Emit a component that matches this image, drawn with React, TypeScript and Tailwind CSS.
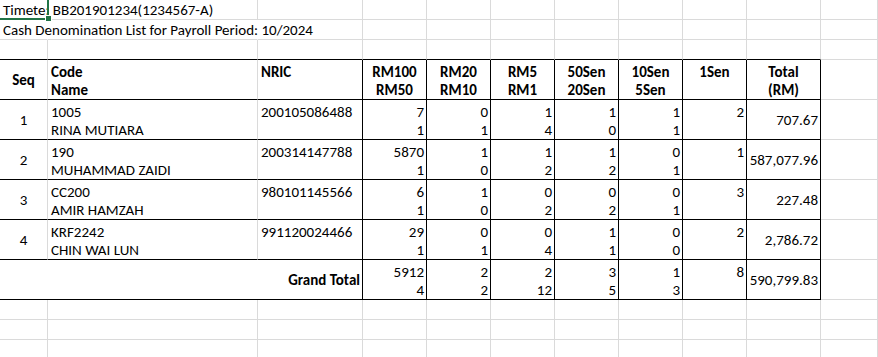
import React from "react";

type Border = "g" | "k" | "n";
const RB: Record<Border, string> = {
  g: "border-r border-r-[#dadada]",
  k: "border-r border-r-black",
  n: "border-r border-r-transparent",
};
const BB: Record<Border, string> = {
  g: "border-b border-b-[#dadada]",
  k: "border-b border-b-black",
  n: "border-b border-b-transparent",
};
const HA = {
  l: "items-start pl-[3px]",
  r: "items-end pr-[2px]",
  c: "items-center",
};
const VA = {
  b: "justify-end",
  c: "justify-center",
};

function Cell({
  r = "g",
  b = "g",
  h = "l",
  v = "b",
  bold = false,
  span3 = false,
  lines = [],
}: {
  r?: Border;
  b?: Border;
  h?: "l" | "r" | "c";
  v?: "b" | "c";
  bold?: boolean;
  span3?: boolean;
  lines?: string[];
}) {
  return (
    <div
      className={`flex flex-col min-w-0 whitespace-nowrap leading-[18px] ${RB[r]} ${BB[b]} ${HA[h]} ${VA[v]} ${
        bold ? "font-bold" : "font-normal"
      } ${span3 ? "col-span-3" : ""}`}
    >
      {lines.map((t, i) => (
        <div key={i}>{t === "" ? "\u00a0" : t}</div>
      ))}
    </div>
  );
}

type Row = {
  seq: string;
  code: string;
  name: string;
  nric: string;
  n: [string, string][];
  s1: string;
  total: string;
};

const rows: Row[] = [
  {
    seq: "1",
    code: "1005",
    name: "RINA MUTIARA",
    nric: "200105086488",
    n: [["7", "1"], ["0", "1"], ["1", "4"], ["1", "0"], ["1", "1"]],
    s1: "2",
    total: "707.67",
  },
  {
    seq: "2",
    code: "190",
    name: "MUHAMMAD ZAIDI",
    nric: "200314147788",
    n: [["5870", "1"], ["1", "0"], ["1", "2"], ["1", "2"], ["0", "1"]],
    s1: "1",
    total: "587,077.96",
  },
  {
    seq: "3",
    code: "CC200",
    name: "AMIR HAMZAH",
    nric: "980101145566",
    n: [["6", "1"], ["1", "0"], ["0", "2"], ["0", "2"], ["0", "1"]],
    s1: "3",
    total: "227.48",
  },
  {
    seq: "4",
    code: "KRF2242",
    name: "CHIN WAI LUN",
    nric: "991120024466",
    n: [["29", "1"], ["0", "1"], ["0", "4"], ["1", "1"], ["0", "0"]],
    s1: "2",
    total: "2,786.72",
  },
];

const grand: [string, string][] = [
  ["5912", "4"],
  ["2", "2"],
  ["2", "12"],
  ["3", "5"],
  ["1", "3"],
];

const headers: [string, string][] = [
  ["RM100", "RM50"],
  ["RM20", "RM10"],
  ["RM5", "RM1"],
  ["50Sen", "20Sen"],
  ["10Sen", "5Sen"],
];

function EmptyRow({ bottom = "g" as Border }) {
  return (
    <>
      {Array.from({ length: 11 }).map((_, i) => (
        <Cell key={i} b={i < 10 ? bottom : "g"} />
      ))}
    </>
  );
}

export default function App() {
  return (
    <div className="relative w-[878px] h-[357px] overflow-hidden bg-white text-black text-[15px] font-[family-name:Calibri,Carlito,Lato,sans-serif]">
      <div className="grid grid-cols-[48px_210px_105px_64px_64px_64px_64px_64px_64px_74px_57px] grid-rows-[20px_20px_20px_40px_40px_40px_40px_40px_40px_20px_20px_20px]">
        {/* Row 1 */}
        <Cell r="n" lines={["Timete: BB201901234(1234567-A)"]} />
        {Array.from({ length: 10 }).map((_, i) => (
          <Cell key={"r1" + i} />
        ))}
        {/* Row 2 */}
        <Cell r="n" lines={["Cash Denomination List for Payroll Period: 10/2024"]} />
        <Cell r="n" />
        {Array.from({ length: 9 }).map((_, i) => (
          <Cell key={"r2" + i} />
        ))}
        {/* Row 3 */}
        <EmptyRow bottom="k" />
        {/* Header */}
        <Cell b="k" h="c" v="c" bold lines={["Seq"]} />
        <Cell b="k" bold lines={["Code", "Name"]} />
        <Cell r="k" b="k" bold lines={["NRIC", ""]} />
        {headers.map((hd, i) => (
          <Cell key={"h" + i} r="k" b="k" h="c" bold lines={hd} />
        ))}
        <Cell r="k" b="k" h="c" bold lines={["1Sen", ""]} />
        <Cell r="k" b="k" h="c" bold lines={["Total", "(RM)"]} />
        <Cell />
        {/* Data */}
        {rows.map((row) => (
          <React.Fragment key={row.seq}>
            <Cell b="k" h="c" v="c" lines={[row.seq]} />
            <Cell b="k" lines={[row.code, row.name]} />
            <Cell r="k" b="k" lines={[row.nric, ""]} />
            {row.n.map((pair, i) => (
              <Cell key={i} r="k" b="k" h="r" lines={pair} />
            ))}
            <Cell r="k" b="k" h="r" lines={[row.s1, ""]} />
            <Cell r="k" b="k" h="r" v="c" lines={[row.total]} />
            <Cell />
          </React.Fragment>
        ))}
        {/* Grand total */}
        <Cell span3 r="k" b="k" h="r" v="c" bold lines={["Grand Total"]} />
        {grand.map((pair, i) => (
          <Cell key={"g" + i} r="k" b="k" h="r" lines={pair} />
        ))}
        <Cell r="k" b="k" h="r" lines={["8", ""]} />
        <Cell r="k" b="k" h="r" v="c" lines={["590,799.83"]} />
        <Cell />
        {/* Trailing rows */}
        <EmptyRow />
        <EmptyRow />
        <EmptyRow />
      </div>
      {/* Selection border on A1 */}
      <div className="absolute left-[-10px] top-[-10px] w-[59px] h-[30px] border-2 border-[#217346] pointer-events-none" />
      {/* Fill handle */}
      <div className="absolute left-[45px] top-[15px] w-[7px] h-[7px] bg-white p-[1px]">
        <div className="w-full h-full bg-[#217346]" />
      </div>
    </div>
  );
}
